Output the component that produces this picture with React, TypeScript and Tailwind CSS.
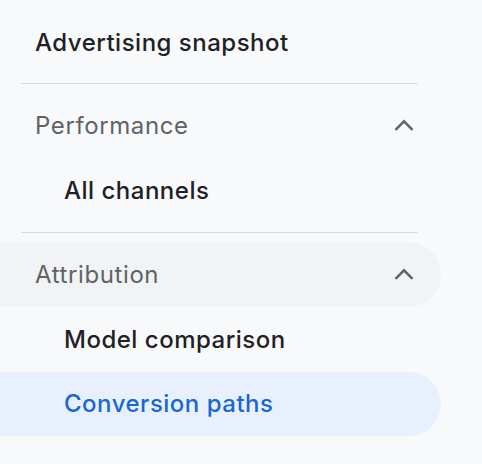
import React from "react";

function Chevron() {
  return (
    <svg width="24" height="24" viewBox="0 0 24 24" fill="none" className="shrink-0">
      <polyline points="3.5,15.8 12,7.3 20.5,15.8" stroke="#5f6368" strokeWidth="2.4" strokeLinecap="butt" strokeLinejoin="miter" />
    </svg>
  );
}

function Divider({ top, bottom }: { top: string; bottom: string }) {
  return <div className={`ml-[21px] w-[397px] h-px bg-[#dadce0] ${top} ${bottom}`} />;
}

export default function App() {
  return (
    <div
      className="w-[482px] h-[464px] bg-[#f8f9fa] pt-[10px] overflow-hidden text-[24px] tracking-[0.5px]"
      style={{ fontFamily: "Inter, sans-serif" }}
    >
      <div className="w-[441px] h-[65px] flex items-center pl-[35px] font-medium text-[#202124]">
        Advertising snapshot
      </div>
      <Divider top="mt-[8px]" bottom="mb-[9px]" />
      <div className="w-[441px] h-[65px] flex items-center justify-between pl-[35px] pr-[25px] tracking-[0.6px] text-[#5f6368]">
        <span>Performance</span>
        <Chevron />
      </div>
      <div className="w-[441px] h-[65px] flex items-center pl-[64px] font-medium text-[#202124]">
        All channels
      </div>
      <Divider top="mt-[9px]" bottom="mb-[9px]" />
      <div className="w-[441px] h-[65px] flex items-center justify-between pl-[35px] pr-[25px] tracking-[0.6px] text-[#5f6368] bg-[#f1f3f4] rounded-r-full">
        <span>Attribution</span>
        <Chevron />
      </div>
      <div className="w-[441px] h-[65px] flex items-center pl-[64px] font-medium text-[#202124]">
        Model comparison
      </div>
      <div className="w-[441px] h-[64px] flex items-center pl-[64px] font-medium text-[#1967d2] bg-[#e8f0fe] rounded-r-full">
        Conversion paths
      </div>
    </div>
  );
}
